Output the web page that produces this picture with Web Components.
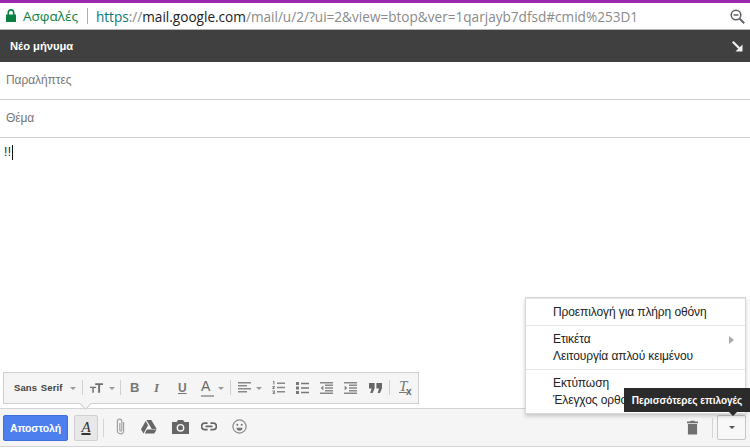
<!DOCTYPE html>
<html><head><meta charset="utf-8">
<style>html,body{margin:0;padding:0;background:#fff}body{width:750px;height:448px;overflow:hidden;font-family:"Liberation Sans",Arial,sans-serif}</style>
</head><body>
<compose-window></compose-window>
<script>
const I={
 lock:'<svg width="10" height="13" viewBox="0 0 10 13"><path fill="#0b8043" d="M0 5.5h10V13H0z"/><path fill="none" stroke="#0b8043" stroke-width="1.6" d="M2.3 6V3.6a2.7 2.7 0 0 1 5.4 0V6"/></svg>',
 zoom:'<svg width="15" height="15" viewBox="0 0 15 15" fill="none" stroke="#5f6368" stroke-width="1.5"><circle cx="6" cy="6" r="4.8"/><path d="M3.6 6h4.8"/><path stroke-width="2" d="M9.6 9.6l4.6 4.6"/></svg>',
 arrow:'<svg width="11" height="11" viewBox="0 0 11 11"><path fill="none" stroke="#f0f0f0" stroke-width="2.2" d="M.8.8l8 8"/><path fill="#f0f0f0" d="M10.5 3.5v7h-7z"/></svg>',
 size:'<svg width="13" height="10" viewBox="0 0 15 11" fill="#707070"><path d="M0 4h7v1.6H4.4V11H2.7V5.6H0z"/><path d="M6 0h9v2h-3.400v9H9.400V2H6z"/></svg>',
 left:'<svg width="13" height="11" viewBox="0 0 13 11" fill="#888"><path d="M0 0h13v1.400H0zM0 3h9v1.400H0zM0 6h13v1.400H0zM0 9h9v1.400H0z"/></svg>',
 ol:'<svg width="13" height="13" viewBox="0 0 13 13"><path fill="#888" d="M5 1.500h8v1.400H5zM5 5.800h8v1.400H5zM5 10.100h8v1.400H5z"/><path fill="#777" d="M1 0h1.400v3.600H1.400V1H1zM.4 5h2.400v.9l-1.300 1.300h1.300V8H.4v-.9l1.300-1.300H.4zM.4 9.600h2.400v3.400H.4v-.8h1.500v-.5H1v-.7h.9v-.6H.4z"/></svg>',
 ul:'<svg width="13" height="12" viewBox="0 0 13 12" fill="#777"><path d="M0 0h3v3H0zM0 4.500h3v3H0zM0 9h3v3H0zM5 .8h8v1.400H5zM5 5.300h8v1.400H5zM5 9.800h8v1.400H5z"/></svg>',
 outd:'<svg width="13" height="12" viewBox="0 0 13 12" fill="#888"><path d="M0 0h13v1.400H0zM5 2.600h8V4H5zM5 5.300h8v1.400H5zM5 8h8v1.400H5zM0 10.600h13V12H0zM3.400 3.600v4.800L.6 6z"/></svg>',
 ind:'<svg width="13" height="12" viewBox="0 0 13 12" fill="#888"><path d="M0 0h13v1.400H0zM5 2.600h8V4H5zM5 5.300h8v1.400H5zM5 8h8v1.400H5zM0 10.600h13V12H0zM.6 3.600v4.800L3.400 6z"/></svg>',
 quote:'<svg width="13" height="10" viewBox="0 0 13 10" fill="#666"><path d="M0 0h5.600v5.200L3.600 10H1.200l1.500-4.400H0zM7.400 0H13v5.200L11 10H8.600l1.500-4.400H7.400z"/></svg>',
 clip:'<svg width="11" height="17" viewBox="0 0 11 17" fill="none" stroke="#a0a0a0" stroke-width="1.200"><path d="M8.600 4v8.700a3.100 3.100 0 0 1-6.200 0V3.300a2.200 2.200 0 0 1 4.400 0v8.600a1 1 0 0 1-2 0V5"/></svg>',
 drive:'<svg width="16" height="14" viewBox="0 0 16 14" fill="#666"><path d="M5.400 0h4.900l5.400 9h-4.900z"/><path d="M4.700 1L7.100 5.200 2.500 13.400 0 9.200z"/><path d="M6 9.600h9.600l-2.300 4H3.700z"/></svg>',
 cam:'<svg width="17" height="14" viewBox="0 0 17 14"><path fill="#666" d="M0 2h4.500L6 0h5l1.500 2H17v12H0z"/><circle cx="8.500" cy="7.800" r="3.900" fill="#f5f5f5"/><circle cx="8.500" cy="7.800" r="2.500" fill="#666"/></svg>',
 link:'<svg width="16" height="9" viewBox="0 0 17 9" fill="none" stroke="#666" stroke-width="1.800"><path d="M7 1H4a3.400 3.400 0 0 0 0 6.800h3M10 1h3a3.400 3.400 0 0 1 0 6.800h-3M4.800 4.400h7.400"/></svg>',
 smile:'<svg width="15" height="15" viewBox="0 0 15 15"><circle cx="7.500" cy="7.500" r="6.600" fill="none" stroke="#888" stroke-width="1.200"/><circle cx="5.300" cy="5.700" r="1" fill="#777"/><circle cx="9.700" cy="5.700" r="1" fill="#777"/><path fill="#777" d="M4.500 8.700h6a3 3 0 0 1-6 0z"/></svg>',
 trash:'<svg width="11" height="15" viewBox="0 0 12 15" fill="#707070"><path d="M4 0h4l.8 1H12v1.800H0V1h3.200zM1 3.800h10V15H1z"/></svg>'
};
function def(name,css,html){customElements.define(name,class extends HTMLElement{constructor(){super();this.attachShadow({mode:'open'}).innerHTML='<style>'+css+'</style>'+html}})}

def('address-bar',`:host{display:flex;align-items:center;height:26px;margin-top:3px;background:#fff;border-bottom:1px solid #b5b5b5;font:13.6px "Open Sans",sans-serif;white-space:nowrap;color:#8a8a8a}
.lock{margin-left:6px;display:flex;margin-top:-2px}.sec{margin-left:7px;color:#0b8043;font-size:13.5px}.sep{width:1px;height:16px;background:#b0b0b0;margin:0 8px 0 9px}
.g{color:#0b7a7a}.d{color:#222}.url{letter-spacing:0;flex:1}.z{margin-right:5px;display:flex}`,
`<span class="lock">${I.lock}</span><span class="sec">Ασφαλές</span><span class="sep"></span><span class="url"><span class="g">https</span>://<span class="d">mail.google.com</span>/mail/u/2/?ui=2&amp;view=btop&amp;ver=1qarjayb7dfsd#cmid%253D1</span><span class="z">${I.zoom}</span>`);

def('title-bar',`:host{display:flex;justify-content:space-between;align-items:center;height:32px;background:#404040;color:#fff;font:bold 11.200px "Liberation Sans",sans-serif;padding:0 7px 0 10px}span{display:flex}`,
`<slot></slot><span>${I.arrow}</span>`);

def('field-row',`:host{display:flex;align-items:center;height:35px;padding-bottom:2px;border-bottom:1px solid #cfcfcf;padding-left:6px;font:12px "Liberation Sans",sans-serif;color:#777;letter-spacing:-.08px}`,`<slot></slot>`);

def('msg-body',`:host{display:flex;flex:1;padding:7px 0 0 4px;font:12px "Liberation Sans",sans-serif;color:#222;align-items:flex-start;line-height:14px;letter-spacing:.5px}i{display:block;width:1px;height:15px;background:#111;margin-left:0}`,`<slot></slot><i></i>`);

def('format-bar',`:host{position:absolute;left:3px;top:372px;width:416px;height:32px;box-sizing:border-box;border:1px solid #cfcfcf;background:#f5f5f5;display:block;color:#666;font:12px "Liberation Sans",sans-serif}
.b{position:absolute;top:0;height:29px;display:flex;align-items:center;justify-content:center}
.sep{position:absolute;top:7px;width:1px;height:15px;background:#d0d0d0}
.c{position:absolute;top:14px;border:3px solid transparent;border-top-color:#999;border-bottom:0}
.font{left:10px;font:bold 9.500px "Liberation Sans",sans-serif;color:#444;letter-spacing:.1px;word-spacing:1px}`,
`<span class="b font">Sans Serif</span><span class="c" style="left:66px"></span><span class="sep" style="left:78px"></span>
<span class="b" style="left:86px">${I.size}</span><span class="c" style="left:105px"></span><span class="sep" style="left:116px"></span>
<span class="b" style="left:126px;font:bold 13px 'Liberation Sans',sans-serif;color:#777">B</span><span class="b" style="left:150px;font:italic bold 13px 'Liberation Serif',serif;color:#777">I</span>
<span class="b" style="left:174px;font:bold 12px 'Liberation Sans',sans-serif;color:#777;text-decoration:underline">U</span>
<span class="b" style="left:197px;font:14px 'Liberation Sans',sans-serif;color:#666;top:-2px">A</span><span style="position:absolute;left:197px;top:22px;width:13px;height:2px;background:#aaa"></span><span class="c" style="left:214px"></span><span class="sep" style="left:226px"></span>
<span class="b" style="left:234px">${I.left}</span><span class="c" style="left:252px"></span>
<span class="b" style="left:268px">${I.ol}</span><span class="b" style="left:292px">${I.ul}</span><span class="b" style="left:316px">${I.outd}</span><span class="b" style="left:340px">${I.ind}</span><span class="b" style="left:365px">${I.quote}</span>
<span class="sep" style="left:385px"></span>
<span class="b" style="left:395px;font:italic 15px 'Liberation Serif',serif;color:#777;text-decoration:underline;top:-1px">T</span><span class="b" style="left:402px;top:4px;font:bold 10px 'Liberation Sans',sans-serif;color:#666">x</span>`);

def('send-button',`:host{display:flex;align-items:center;justify-content:center;width:65px;height:26px;box-sizing:border-box;background:#4d7fef;border:1px solid #3f6fd8;border-radius:2px;color:#fff;font:bold 10.500px "Liberation Sans",sans-serif;letter-spacing:-.1px}`,`<slot></slot>`);

def('tool-bar',`:host{display:flex;align-items:center;box-sizing:border-box;height:39px;background:#f5f5f5;border-top:1px solid #d4d4d4;border-bottom:1px solid #d4d4d4;padding:0 4px 0 3px;margin-bottom:1px}
.a{margin-left:6px;width:24px;height:26px;box-sizing:border-box;background:#e8e8e8;border:1px solid #d0d0d0;border-radius:2px;display:flex;align-items:center;justify-content:center;font:italic 15px "Liberation Serif",serif;color:#333;text-decoration:underline;text-decoration-thickness:2px}
.s{width:1px;height:18px;background:#d4d4d4;margin:0 0 0 5px}.i{display:flex;align-items:center;justify-content:center}.u{padding-bottom:2px}
.sp{flex:1}.more{width:29px;height:25px;box-sizing:border-box;border:1px solid #c6c6c6;border-radius:2px;display:flex;align-items:center;justify-content:center;background:#f8f8f8;margin-left:4px}
.more i{border:3px solid transparent;border-top-color:#555;border-bottom:0}`,
`<slot></slot><span class="a">A</span><span class="s"></span>
<span class="i u" style="margin-left:11px">${I.clip}</span><span class="i u" style="margin-left:15px">${I.drive}</span><span class="i u" style="margin-left:15px">${I.cam}</span><span class="i u" style="margin-left:12px">${I.link}</span><span class="i u" style="margin-left:15px">${I.smile}</span>
<span class="sp"></span><span class="i">${I.trash}</span><span class="s" style="margin-left:14px;height:20px"></span><span class="more"><i></i></span>`);

def('more-menu',`:host{position:absolute;left:525px;top:297px;width:221px;height:117px;box-sizing:border-box;background:#fff;border:1px solid #d8d8d8;box-shadow:0 2px 4px rgba(0,0,0,.2);font:12px "Liberation Sans",sans-serif;color:#222;overflow:hidden;letter-spacing:-.11px}
.g{border-top:1px solid #e6e6e6;padding:5px 0 4px 27px;position:relative}.g:first-child{border-top:0}.r{height:17px;line-height:17px;white-space:nowrap}
.t{position:absolute;right:11px;top:9.500px;border:4px solid transparent;border-left:5px solid #aaa;border-right:0}`,
`<div class="g"><div class="r">Προεπιλογή για πλήρη οθόνη</div></div>
<div class="g"><div class="r">Ετικέτα</div><div class="r">Λειτουργία απλού κειμένου</div><span class="t"></span></div>
<div class="g"><div class="r">Εκτύπωση</div><div class="r">Έλεγχος ορθογραφίας</div></div>`);

def('more-tip',`:host{position:absolute;left:624px;top:388px;width:126px;height:24px;box-sizing:border-box;background:#2b2b2b;color:#fff;font:bold 10px "Liberation Sans",sans-serif;display:flex;align-items:center;justify-content:center;white-space:nowrap}
:host::after{content:"";position:absolute;left:105px;top:24px;border:4px solid transparent;border-top-color:#2b2b2b;border-bottom:0}`,`<slot></slot>`);

def('compose-window',`:host{display:flex;flex-direction:column;width:750px;height:448px;position:relative;overflow:hidden}
.top{position:absolute;left:0;top:0;width:750px;height:3px;background:#9c27b0}.nub{position:absolute;left:81px;top:399px;width:8px;height:8px;background:#f5f5f5;border-right:1px solid #cfcfcf;border-bottom:1px solid #cfcfcf;transform:rotate(45deg);z-index:2}`,
`<div class="top"></div><address-bar></address-bar><title-bar>Νέο μήνυμα</title-bar>
<field-row>Παραλήπτες</field-row><field-row>Θέμα</field-row><msg-body>!!</msg-body>
<tool-bar><send-button>Αποστολή</send-button></tool-bar><format-bar></format-bar><span class="nub"></span><more-menu></more-menu><more-tip>Περισσότερες επιλογές</more-tip>`);
</script>
</body></html>
